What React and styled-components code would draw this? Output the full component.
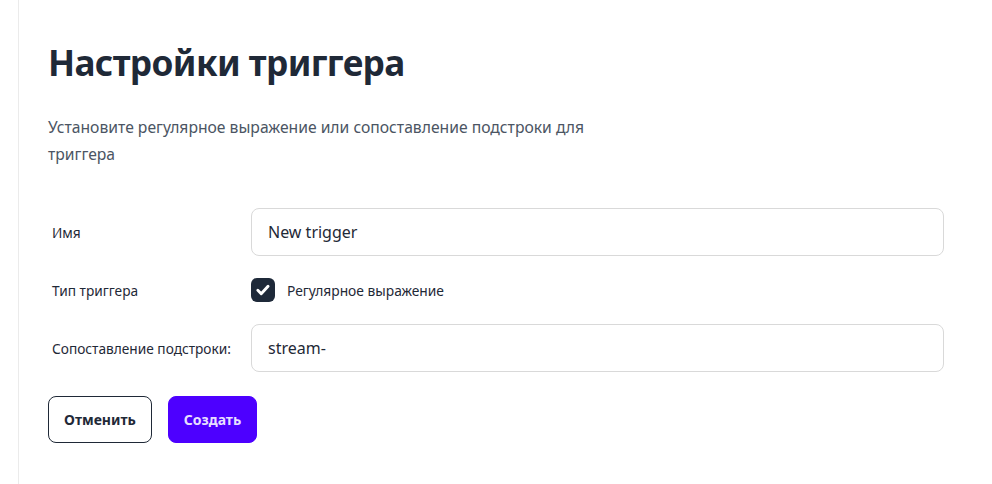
import React, { useState } from 'react'
import styled, { createGlobalStyle } from 'styled-components'

const GlobalStyle = createGlobalStyle`
  html, body {
    margin: 0;
    padding: 0;
    background: #ffffff;
  }
  body {
    font-family: "Noto Sans", "Open Sans", sans-serif;
    color: #1f2937;
  }
`

const Page = styled.div`
  display: flex;
  min-height: 484px;
  padding-left: 18px;
  box-sizing: border-box;
`

const Panel = styled.section`
  flex: 1;
  border-left: 1px solid #ebebeb;
  padding: 38px 48px 40px 29px;
`

const Title = styled.h1`
  margin: 0;
  font-size: 35.2px;
  line-height: 48px;
  font-weight: 700;
  color: #1f2937;
  letter-spacing: -0.6px;
`

const Description = styled.p`
  margin: 28px 0 0;
  max-width: 590px;
  font-size: 15.7px;
  line-height: 27px;
  color: #4b5563;
`

const Form = styled.form`
  display: grid;
  grid-template-columns: 203px 1fr;
  row-gap: 22px;
  align-items: center;
  margin-top: 40px;
`

const Label = styled.label`
  padding-left: 4px;
  font-size: 13.7px;
  color: #1f2937;
`

const Input = styled.input`
  box-sizing: border-box;
  width: 100%;
  height: 48px;
  padding: 0 16px;
  border: 1px solid #d9d9d9;
  border-radius: 8px;
  font-family: inherit;
  font-size: 16px;
  color: #1f2937;
  outline: none;
`

const CheckRow = styled.label`
  display: flex;
  align-items: center;
  gap: 12px;
  font-size: 13.8px;
  color: #1f2937;
  cursor: pointer;
`

const Box = styled.span`
  display: flex;
  align-items: center;
  justify-content: center;
  width: 24px;
  height: 24px;
  border-radius: 6px;
  background: ${p => (p.checked ? '#1e2939' : '#ffffff')};
  border: ${p => (p.checked ? 'none' : '1px solid #d1d5db')};
  box-sizing: border-box;
`

const Actions = styled.div`
  display: flex;
  gap: 16px;
  margin-top: 24px;
`

const Button = styled.button`
  height: 47px;
  padding: 0 15px;
  border-radius: 8px;
  font-family: inherit;
  font-size: 14px;
  font-weight: 700;
  cursor: pointer;
  border: 1px solid ${p => (p.primary ? '#4d00ff' : '#1f2937')};
  background: ${p => (p.primary ? '#4d00ff' : '#ffffff')};
  color: ${p => (p.primary ? '#e6deff' : '#1f2937')};
`

export default function App() {
  const [name, setName] = useState('New trigger')
  const [regex, setRegex] = useState(true)
  const [match, setMatch] = useState('stream-')

  return (
    <>
      <GlobalStyle />
      <Page>
        <Panel>
          <Title>Настройки триггера</Title>
          <Description>
            Установите регулярное выражение или сопоставление подстроки для триггера
          </Description>

          <Form onSubmit={e => e.preventDefault()}>
            <Label htmlFor="trigger-name">Имя</Label>
            <Input id="trigger-name" value={name} onChange={e => setName(e.target.value)} />

            <Label>Тип триггера</Label>
            <CheckRow onClick={() => setRegex(!regex)}>
              <Box checked={regex}>
                {regex && (
                  <svg width="18" height="18" viewBox="0 0 16 16" fill="none">
                    <path d="M3.4 8.3l3 3 6.1-6.6" stroke="#ffffff" strokeWidth="2.6" strokeLinecap="round" strokeLinejoin="round" />
                  </svg>
                )}
              </Box>
              Регулярное выражение
            </CheckRow>

            <Label htmlFor="trigger-match">Сопоставление подстроки:</Label>
            <Input id="trigger-match" value={match} onChange={e => setMatch(e.target.value)} />
          </Form>

          <Actions>
            <Button type="button">Отменить</Button>
            <Button type="button" primary>Создать</Button>
          </Actions>
        </Panel>
      </Page>
    </>
  )
}
